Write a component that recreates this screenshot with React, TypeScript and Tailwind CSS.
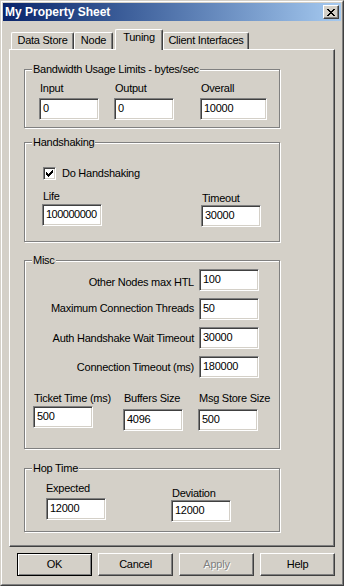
import React from "react";

// win2000-style property sheet
const sunken =
  "border border-t-[#808080] border-l-[#808080] border-b-white border-r-white shadow-[inset_1px_1px_0_#404040,inset_-1px_-1px_0_#d4d0c8]";
const raised =
  "border border-t-white border-l-white border-b-[#404040] border-r-[#404040] shadow-[inset_-1px_-1px_0_#808080]";

const Field: React.FC<{ value: string; className?: string }> = ({ value, className = "w-[60px]" }) => (
  <div className={`${className} h-[22px] flex items-center px-[3px] pb-[1px] bg-white ${sunken}`}>
    <span>{value}</span>
  </div>
);

const Group: React.FC<{ title: string; className: string; children: React.ReactNode }> = ({
  title,
  className,
  children,
}) => (
  <div
    className={`relative w-[256px] ml-[14px] border border-[#808080] shadow-[inset_1px_1px_0_#fff,1px_1px_0_#fff] ${className}`}
  >
    <span className="absolute left-[7px] -top-[7px] px-[1px] bg-[#d4d0c8] leading-[13px] whitespace-nowrap">
      {title}
    </span>
    {children}
  </div>
);

const pixels = (rows: string[]) =>
  rows.flatMap((row, y) =>
    row.split("").map((c, x) => (c === "X" ? <rect key={`${x}-${y}`} x={x} y={y} width={1} height={1} /> : null))
  );

const CloseGlyph = () => (
  <svg width="8" height="7" viewBox="0 0 8 7" shapeRendering="crispEdges" fill="#000">
    {pixels(["XX....XX", ".XX..XX.", "..XXXX..", "...XX...", "..XXXX..", ".XX..XX.", "XX....XX"])}
  </svg>
);

const CheckGlyph = () => (
  <svg width="7" height="7" viewBox="0 0 7 7" shapeRendering="crispEdges" fill="#000">
    {pixels(["......X", ".....XX", "X...XXX", "XX.XXX.", "XXXXX..", ".XXX...", "..X...."])}
  </svg>
);

const tabs = [
  { label: "Data Store", w: "w-[63px]" },
  { label: "Node", w: "w-[39px]" },
  { label: "Tuning", w: "w-[48px]", active: true },
  { label: "Client Interfaces", w: "w-[86px]" },
];

const miscRows = [
  { label: "Other Nodes max HTL", value: "100", adj: "mt-[4px]" },
  { label: "Maximum Connection Threads", value: "50", adj: "-mt-[2px]" },
  { label: "Auth Handshake Wait Timeout", value: "30000", adj: "" },
  { label: "Connection Timeout (ms)", value: "180000", adj: "" },
];

const App: React.FC = () => {
  return (
    <div className="w-[344px] h-[586px] bg-[#d4d0c8] font-['Liberation_Sans',Arial,sans-serif] text-[11px] leading-[13px] tracking-[-0.25px] text-black border border-t-[#d4d0c8] border-l-[#d4d0c8] border-b-[#404040] border-r-[#404040]">
      <div className="h-full p-[1px] flex flex-col border border-t-white border-l-white border-b-[#808080] border-r-[#808080]">
        {/* title bar */}
        <div className="h-[18px] flex items-center justify-between bg-linear-to-r from-[#0a246a] to-[#a6caf0]">
          <span className="pl-[2px] text-white font-bold text-[12px] tracking-normal">My Property Sheet</span>
          <div className={`w-[16px] h-[14px] mr-[2px] flex items-center justify-center bg-[#d4d0c8] ${raised}`}>
            <CloseGlyph />
          </div>
        </div>

        <div className="flex-1 flex flex-col px-[6px] pt-[8px]">
          {/* tabs */}
          <div className="h-[20px] flex items-end pl-[2px]">
            {tabs.map((t) => (
              <div
                key={t.label}
                className={`${t.w} ${
                  t.active ? "h-[21px] -mb-[1px] ml-[2px] relative z-10" : "h-[17px]"
                } pt-[1px] text-center whitespace-nowrap bg-[#d4d0c8] rounded-t-[2px] border-l border-t border-l-white border-t-white border-r border-r-[#404040] shadow-[inset_-1px_0_0_#808080]`}
              >
                {t.label}
              </div>
            ))}
          </div>

          {/* panel */}
          <div className="h-[498px] flex flex-col border border-t-white border-l-white border-b-[#404040] border-r-[#404040] shadow-[inset_-1px_-1px_0_#808080]">
            <Group title="Bandwidth Usage Limits - bytes/sec" className="h-[59px] mt-[19px]">
              <div className="flex items-start pl-[14px] pt-[12px]">
                <div className="flex flex-col gap-[3px]">
                  <span className="pl-[1px]">Input</span>
                  <Field value="0" />
                </div>
                <div className="flex flex-col gap-[3px] ml-[15px]">
                  <span className="pl-[1px]">Output</span>
                  <Field value="0" />
                </div>
                <div className="flex flex-col gap-[3px] ml-[26px]">
                  <span className="pl-[1px]">Overall</span>
                  <Field value="10000" className="w-[67px]" />
                </div>
              </div>
            </Group>

            <Group title="Handshaking" className="h-[100px] mt-[14px]">
              <div className="pt-[24px] pl-[18px]">
                <div className="h-[13px] flex items-center gap-[6px]">
                  <div className={`w-[13px] h-[13px] flex items-center justify-center bg-white ${sunken}`}>
                    <CheckGlyph />
                  </div>
                  <span>Do Handshaking</span>
                </div>
              </div>
              <div className="flex items-start mt-[10px] pl-[17px]">
                <div className="flex flex-col gap-[1px]">
                  <span className="pl-[1px]">Life</span>
                  <Field value="100000000" className="w-[60px] tracking-[-0.5px]" />
                </div>
                <div className="flex flex-col ml-[99px] mt-[2px]">
                  <span className="pl-[1px]">Timeout</span>
                  <Field value="30000" />
                </div>
              </div>
            </Group>

            <Group title="Misc" className="h-[189px] mt-[18px]">
              <div className="pt-[8px] pr-[20px] flex flex-col gap-[7px]">
                {miscRows.map((r) => (
                  <div key={r.label} className="flex items-center">
                    <span className={`flex-1 text-right whitespace-nowrap ${r.adj}`}>{r.label}</span>
                    <Field value={r.value} className="w-[60px] ml-[5px]" />
                  </div>
                ))}
              </div>
              <div className="flex items-start mt-[14px] pl-[8px]">
                <div className="w-[60px] flex flex-col gap-[1px]">
                  <span className="pl-[1px] whitespace-nowrap">Ticket Time (ms)</span>
                  <Field value="500" />
                </div>
                <div className="w-[60px] flex flex-col gap-[4px] ml-[30px]">
                  <span className="pl-[1px] whitespace-nowrap">Buffers Size</span>
                  <Field value="4096" />
                </div>
                <div className="w-[60px] flex flex-col gap-[4px] ml-[15px]">
                  <span className="pl-[1px] whitespace-nowrap">Msg Store Size</span>
                  <Field value="500" />
                </div>
              </div>
            </Group>

            <Group title="Hop Time" className="h-[64px] mt-[19px]">
              <div className="flex items-start pl-[21px] pt-[13px]">
                <div className="flex flex-col gap-[3px]">
                  <span>Expected</span>
                  <Field value="12000" />
                </div>
                <div className="flex flex-col ml-[65px] mt-[5px]">
                  <span className="pl-[1px]">Deviation</span>
                  <Field value="12000" />
                </div>
              </div>
            </Group>
          </div>

          {/* buttons */}
          <div className="flex justify-end gap-[6px] mt-[6px]">
            <button className="w-[75px] h-[23px] flex items-center justify-center bg-[#d4d0c8] border border-black shadow-[inset_1px_1px_0_#fff,inset_-1px_-1px_0_#808080]">
              OK
            </button>
            <button className={`w-[75px] h-[23px] flex items-center justify-center bg-[#d4d0c8] ${raised}`}>
              Cancel
            </button>
            <button
              className={`w-[75px] h-[23px] flex items-center justify-center bg-[#d4d0c8] text-[#808080] [text-shadow:1px_1px_0_#fff] ${raised}`}
            >
              Apply
            </button>
            <button className={`w-[75px] h-[23px] flex items-center justify-center bg-[#d4d0c8] ${raised}`}>
              Help
            </button>
          </div>
        </div>
      </div>
    </div>
  );
};

export default App;
